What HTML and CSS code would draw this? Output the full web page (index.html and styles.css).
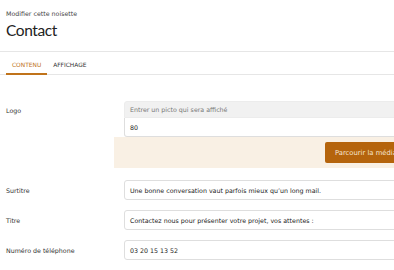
FILE: index.html
```html
<!DOCTYPE html>
<html lang="fr">
<head>
<meta charset="utf-8">
<link rel="stylesheet" href="styles.css">
</head>
<body>
<div class="page">
  <header class="head">
    <div class="sub">Modifier cette noisette</div>
    <h1 class="title">Contact</h1>
  </header>
  <nav class="tabs">
    <span class="tab active">CONTENU</span>
    <span class="tab">AFFICHAGE</span>
  </nav>
  <div class="form">
    <div class="row logo-row">
      <div class="label">Logo</div>
      <div class="field-group">
        <div class="field addon">Entrer un picto qui sera affiché</div>
        <div class="field value">80</div>
      </div>
    </div>
    <div class="media-panel">
      <span class="btn">Parcourir la médiathèque</span>
    </div>
    <div class="row">
      <div class="label">Surtitre</div>
      <div class="field">Une bonne conversation vaut parfois mieux qu’un long mail.</div>
    </div>
    <div class="row">
      <div class="label">Titre</div>
      <div class="field">Contactez nous pour présenter votre projet, vos attentes :</div>
    </div>
    <div class="row">
      <div class="label">Numéro de téléphone</div>
      <div class="field">03 20 15 13 52</div>
    </div>
  </div>
</div>
</body>
</html>
```
FILE: styles.css
```css
html, body {
  margin: 0;
  padding: 0;
  background: #fff;
  overflow: hidden;
}
.page {
  width: 470px;
  font-family: "DejaVu Sans", Verdana, sans-serif;
  font-size: 6.3px;
  color: #333;
}
.head {
  padding: 9px 6px 0;
  height: 42px;
  border-bottom: 1px solid #e6e6e6;
}
.sub {
  font-size: 6.3px;
  color: #444;
  line-height: 9px;
}
.title {
  margin: 2px 0 0;
  font-family: "Lato", sans-serif;
  font-weight: 400;
  font-size: 15.5px;
  letter-spacing: -0.4px;
  line-height: 20px;
  color: #222;
}
.tabs {
  display: flex;
  padding: 0 6px;
  height: 22px;
  border-bottom: 1px solid #e6e6e6;
}
.tab {
  display: flex;
  align-items: center;
  padding: 3px 6px 0;
  font-size: 5.9px;
  color: #333;
  height: 22px;
  box-sizing: border-box;
}
.active {
  color: #c0731a;
  border-bottom: 2px solid #c0731a;
  margin-bottom: -1px;
  height: 23px;
  padding-top: 4px;
}
.form {
  padding-top: 26px;
}
.row {
  display: flex;
  align-items: center;
  margin-bottom: 10px;
}
.label {
  width: 118px;
  padding-left: 6px;
  flex: none;
  color: #333;
}
.field {
  flex: 1;
  height: 20px;
  box-sizing: border-box;
  border: 1px solid #dedede;
  border-radius: 3px;
  padding-left: 5px;
  display: flex;
  align-items: center;
  background: #fff;
  color: #222;
  white-space: nowrap;
}
.logo-row {
  margin-bottom: 0;
  align-items: flex-start;
}
.logo-row .label {
  line-height: 17px;
  padding-top: 1px;
}
.field-group {
  flex: 1;
  display: flex;
  flex-direction: column;
}
.field-group .field {
  flex: none;
}
.addon {
  height: 17px;
  background: #f1f1f1;
  border-color: #ececec;
  border-radius: 3px 3px 0 0;
  color: #777;
}
.value {
  height: 19px;
  border-radius: 0 0 3px 3px;
  border-top: none;
}
.media-panel {
  margin-left: 114px;
  height: 31px;
  background: #f9f0e4;
  display: flex;
  align-items: center;
  margin-bottom: 12px;
}
.btn {
  margin-left: 211px;
  height: 21px;
  box-sizing: border-box;
  display: flex;
  align-items: center;
  padding: 0 10px;
  background: #b5640c;
  color: #f6e6d2;
  border-radius: 2px;
  font-size: 6.8px;
  white-space: nowrap;
}
```
